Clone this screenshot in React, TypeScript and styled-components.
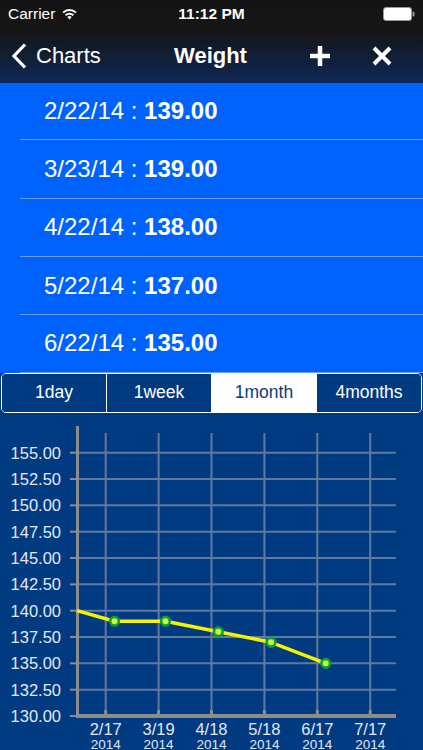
import React from 'react';
import styled, { createGlobalStyle } from 'styled-components';

const GlobalStyle = createGlobalStyle`
  html, body { margin: 0; padding: 0; background: #003a80; }
  body { font-family: 'Liberation Sans', Arial, sans-serif; }
`;

const Screen = styled.div`
  width: 423px;
  height: 750px;
  display: flex;
  flex-direction: column;
  overflow: hidden;
  background: #003a80;
`;

const Header = styled.div`
  background: linear-gradient(to bottom, #141414 0px, #151515 30px, #0e2856 83px);
  color: #fff;
`;

const StatusBar = styled.div`
  height: 28px;
  display: grid;
  grid-template-columns: 1fr auto 1fr;
  align-items: center;
  padding: 0 8px;
  font-size: 15.5px;
`;

const StatusLeft = styled.div`
  display: flex;
  align-items: center;
  gap: 6px;
`;

const Clock = styled.div`
  font-weight: bold;
  font-size: 15.5px;
`;

const StatusRight = styled.div`
  display: flex;
  justify-content: flex-end;
`;

const NavBar = styled.div`
  height: 55px;
  display: flex;
  align-items: center;
  padding: 0 12px;
`;

const BackButton = styled.div`
  display: flex;
  align-items: center;
  gap: 8px;
  font-size: 22px;
  width: 150px;
`;

const Title = styled.div`
  flex: 1;
  text-align: center;
  font-weight: bold;
  font-size: 22px;
  margin-left: -2px;
`;

const NavActions = styled.div`
  display: flex;
  align-items: center;
  gap: 41px;
  width: 150px;
  justify-content: flex-end;
  padding-right: 19px;
  box-sizing: border-box;
`;

const List = styled.div`
  background: #0062fd;
  display: flex;
  flex-direction: column;
`;

const Row = styled.div<{ $h: number }>`
  height: ${(p) => p.$h}px;
  padding-left: 20px;
  display: flex;
`;

const RowInner = styled.div`
  flex: 1;
  display: flex;
  align-items: center;
  padding-left: 24px;
  border-bottom: 1px solid #6a9fff;
  color: #fff;
  font-size: 24px;
  b { font-weight: bold; }
`;

const SegmentWrap = styled.div`
  padding: 0 1px;
  background: #003a80;
`;

const Segments = styled.div`
  display: flex;
  height: 40px;
  box-sizing: border-box;
  border: 1px solid #fff;
  border-radius: 5px;
  overflow: hidden;
`;

const Segment = styled.div<{ $active?: boolean }>`
  flex: 1;
  display: flex;
  align-items: center;
  justify-content: center;
  font-size: 17.5px;
  background: ${(p) => (p.$active ? '#fff' : '#003a80')};
  color: ${(p) => (p.$active ? '#0a3a80' : '#fff')};
  & + & { border-left: 1px solid #fff; }
`;

const ChartArea = styled.div`
  flex: 1;
  background: #003a80;
  svg { display: block; }
`;

const entries = [
  { date: '2/22/14', value: '139.00', h: 57 },
  { date: '3/23/14', value: '139.00', h: 58.5 },
  { date: '4/22/14', value: '138.00', h: 58.5 },
  { date: '5/22/14', value: '137.00', h: 58 },
  { date: '6/22/14', value: '135.00', h: 57.5 },
];

const ranges = ['1day', '1week', '1month', '4months'];

const yFor = (v: number) => 39.7 + ((155 - v) / 2.5) * 26.33;
const gridX = [0, 1, 2, 3, 4, 5].map((j) => 105.7 + j * 52.9);
const xLabels = ['2/17', '3/19', '4/18', '5/18', '6/17', '7/17'];
const yValues = [155, 152.5, 150, 147.5, 145, 142.5, 140, 137.5, 135, 132.5, 130];
const points = [
  { x: 114.5, v: 139 },
  { x: 165.5, v: 139 },
  { x: 218.3, v: 138 },
  { x: 271, v: 137 },
  { x: 325.7, v: 135 },
];

const Wifi = () => (
  <svg width="17" height="12" viewBox="0 0 17 12">
    <path d="M8.5 11.5 L6.3 9.1 A3.2 3.2 0 0 1 10.7 9.1 Z" fill="#fff" />
    <path d="M4.6 7.3 A5.6 5.6 0 0 1 12.4 7.3" stroke="#fff" strokeWidth="1.9" fill="none" />
    <path d="M2.1 4.6 A9.1 9.1 0 0 1 14.9 4.6" stroke="#fff" strokeWidth="1.9" fill="none" />
  </svg>
);

const Battery = () => (
  <svg width="32" height="14" viewBox="0 0 32 14">
    <rect x="0.5" y="0.5" width="28" height="13" rx="2.5" fill="#fff" stroke="#9a9a9a" />
    <rect x="29.5" y="4.5" width="2" height="5" rx="1" fill="#9a9a9a" />
  </svg>
);

const Chevron = () => (
  <svg width="16" height="26" viewBox="0 0 16 26">
    <polyline points="13,1.5 2,13 13,24.5" fill="none" stroke="#fff" strokeWidth="3.2" />
  </svg>
);

const PlusIcon = () => (
  <svg width="22" height="22" viewBox="0 0 22 22">
    <path d="M11 1 V21 M1 11 H21" stroke="#fff" strokeWidth="4.5" />
  </svg>
);

const CloseIcon = () => (
  <svg width="20" height="20" viewBox="0 0 20 20">
    <path d="M2 2 L18 18 M18 2 L2 18" stroke="#fff" strokeWidth="4" />
  </svg>
);

const Chart = () => {
  const gridColor = '#62799c';
  const axisColor = '#8c8c8c';
  const line = [{ x: 77, y: yFor(140) }, ...points.map((p) => ({ x: p.x, y: yFor(p.v) }))]
    .map((p) => `${p.x},${p.y}`)
    .join(' ');
  return (
    <svg width="423" height="338" viewBox="0 0 423 338">
      {yValues.slice(0, -1).map((v) => (
        <line key={v} x1="77" x2="396" y1={yFor(v)} y2={yFor(v)} stroke={gridColor} strokeWidth="2" />
      ))}
      {gridX.map((x) => (
        <line key={x} x1={x} x2={x} y1="20" y2="303" stroke={gridColor} strokeWidth="2" />
      ))}
      {gridX.map((x) => (
        <line key={`t${x}`} x1={x} x2={x} y1="297" y2="303" stroke={axisColor} strokeWidth="3" />
      ))}
      {yValues.map((v) => (
        <line key={`yt${v}`} x1="70" x2="78" y1={yFor(v)} y2={yFor(v)} stroke={axisColor} strokeWidth="2" />
      ))}
      <line x1="77.5" x2="77.5" y1="13" y2="305" stroke={axisColor} strokeWidth="3" />
      <line x1="76" x2="396" y1="303" y2="303" stroke={axisColor} strokeWidth="4" />
      {yValues.map((v) => (
        <text
          key={`yl${v}`}
          x="61"
          y={yFor(v)}
          textAnchor="end"
          dominantBaseline="central"
          fontFamily="'Liberation Sans', Arial, sans-serif"
          fontSize="16.5"
          fill="#e2e8f4"
        >
          {v.toFixed(2)}
        </text>
      ))}
      {gridX.map((x, i) => (
        <g key={`xl${x}`} fontFamily="'Liberation Sans', Arial, sans-serif" fill="#e2e8f4" textAnchor="middle">
          <text x={x} y="316" dominantBaseline="central" fontSize="16.5">
            {xLabels[i]}
          </text>
          <text x={x} y="331" dominantBaseline="central" fontSize="13.5">
            2014
          </text>
        </g>
      ))}
      <polyline points={line} fill="none" stroke="#f4f400" strokeWidth="3.5" strokeLinejoin="round" />
      {points.map((p) => (
        <circle key={p.x} cx={p.x} cy={yFor(p.v)} r="4.3" fill="#ccff33" stroke="#0a9f3a" strokeWidth="2.6" />
      ))}
    </svg>
  );
};

export default function App() {
  return (
    <Screen>
      <GlobalStyle />
      <Header>
        <StatusBar>
          <StatusLeft>
            <span>Carrier</span>
            <Wifi />
          </StatusLeft>
          <Clock>11:12 PM</Clock>
          <StatusRight>
            <Battery />
          </StatusRight>
        </StatusBar>
        <NavBar>
          <BackButton>
            <Chevron />
            <span>Charts</span>
          </BackButton>
          <Title>Weight</Title>
          <NavActions>
            <PlusIcon />
            <CloseIcon />
          </NavActions>
        </NavBar>
      </Header>
      <List>
        {entries.map((e) => (
          <Row key={e.date} $h={e.h}>
            <RowInner>
              {e.date} :&nbsp;<b>{e.value}</b>
            </RowInner>
          </Row>
        ))}
      </List>
      <SegmentWrap>
        <Segments>
          {ranges.map((r) => (
            <Segment key={r} $active={r === '1month'}>
              {r}
            </Segment>
          ))}
        </Segments>
      </SegmentWrap>
      <ChartArea>
        <Chart />
      </ChartArea>
    </Screen>
  );
}
